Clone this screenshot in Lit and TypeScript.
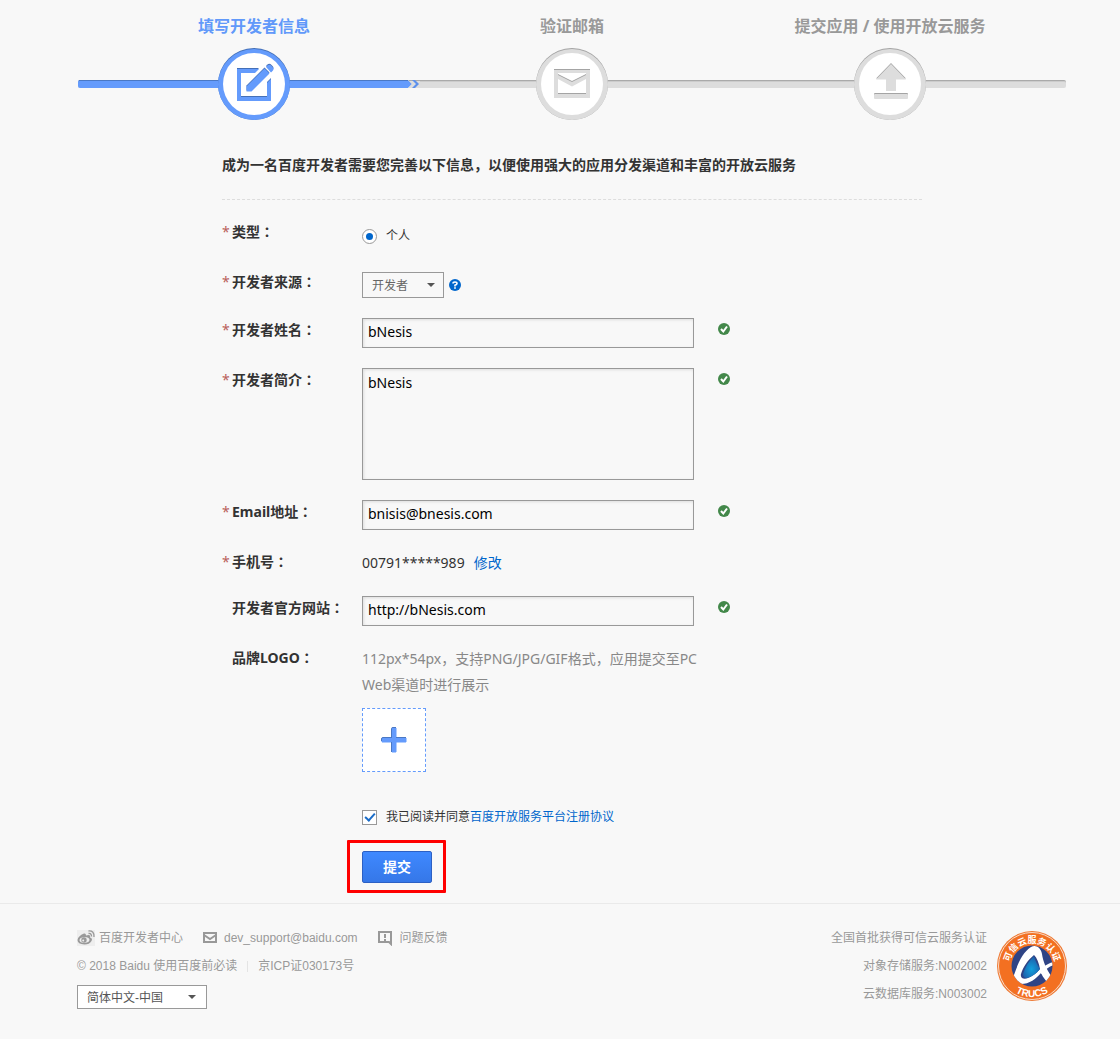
import { LitElement, html, css, svg, nothing } from "lit";
import { customElement, property } from "lit/decorators.js";

const editShape = svg`
  <path d="M19 20H41L37 24H23V48H49V34L53 30V52H19Z"/>
  <path d="M28.500 42.500V37.500L46.500 19.500L51.500 24.500L33.500 42.500Z"/>
  <path d="M48 18L49.500 16.500Q51.500 15 53.500 17L54.500 18Q56.500 20 54.500 22L53 23.500Z"/>`;
const mailShape = svg`
  <path fill-rule="evenodd" d="M18 21H54V49H18ZM22 24V26L36 33L50 26V24ZM22 30V45H50V30L36 37.500Z"/>`;
const uploadShape = svg`
  <path d="M37 15L52 30.500H42V42H32V30.500H22Z"/>
  <rect x="20" y="45" width="34" height="5" rx="1"/>`;

const steps = [
  { title: "填写开发者信息", shape: editShape, active: true },
  { title: "验证邮箱", shape: mailShape, active: false },
  { title: "提交应用 / 使用开放云服务", shape: uploadShape, active: false },
];

@customElement("dev-steps")
class DevSteps extends LitElement {
  static styles = css`
    :host { display: block; }
    .steps {
      position: relative;
      display: flex;
      justify-content: center;
      padding-top: 12px;
    }
    .track {
      position: absolute;
      left: 1px;
      right: 1px;
      bottom: 32px;
      height: 8px;
      box-sizing: border-box;
      background: #ddd;
      border-top: 1px solid #aaa;
      border-radius: 2px;
      box-shadow: inset 0 1px 0 #ccc;
    }
    .progress { position: absolute; left: 0; top: -1px; display: block; }
    .step {
      position: relative;
      flex: 0 1 318px;
      display: flex;
      flex-direction: column;
      align-items: center;
      gap: 8px;
    }
    .title {
      font-size: 16px;
      line-height: 28px;
      font-weight: 700;
      color: #999;
      white-space: nowrap;
    }
    .active .title { color: #6199fa; }
    .icon { display: block; }
    .dark { fill: #a4a4a4; }
    .light { fill: #ddd; }
    .active .dark { fill: #4470b8; }
    .active .light { fill: #649bfc; }
    .disc { fill: #fff; }
  `;
  render() {
    return html`
      <div class="steps">
        <div class="track">
          <svg class="progress" width="342" height="8" viewBox="0 0 342 8" aria-hidden="true">
            <path d="M2 0H330L334 4L330 8H2Q0 8 0 6V2Q0 0 2 0Z" fill="#649bfc"/>
            <path d="M1 0.500H330" stroke="#4a78c4" stroke-width="1"/>
            <path d="M330 0H342V8H330L334 4Z" fill="#ddd"/>
            <path d="M331 0.500H342" stroke="#aaa"/>
            <path d="M334 0H337L341 4L337 8H334L338 4Z" fill="#5c90ec"/>
          </svg>
        </div>
        ${steps.map((s) => html`
          <div class="step ${s.active ? "active" : ""}">
            <div class="title">${s.title}</div>
            <svg class="icon" width="72" height="72" viewBox="0 0 72 72" aria-hidden="true">
              <circle class="dark" cx="36" cy="36" r="36"/>
              <ellipse class="light" cx="36" cy="36.500" rx="36" ry="35.500"/>
              <circle class="disc" cx="36" cy="36" r="31"/>
              <g class="dark">${s.shape}</g>
              <g class="light" transform="translate(0 1)">${s.shape}</g>
            </svg>
          </div>`)}
      </div>`;
  }
}

@customElement("form-row")
class FormRow extends LitElement {
  @property() label = "";
  @property({ type: Boolean }) required = false;
  @property({ type: Boolean }) valid = false;
  static styles = css`
    :host { display: block; font-size: 14px; line-height: 26px; }
    .row { display: flex; align-items: flex-start; }
    .label {
      flex: 0 0 140px;
      display: flex;
      height: 26px;
      line-height: 24px;
      font-weight: 700;
      color: #333;
      white-space: nowrap;
    }
    .star { flex: 0 0 10px; font-weight: 400; color: #b9605a; }
    .colon { font-family: "Noto Sans CJK TC", sans-serif; line-height: 1; }
    .field { flex: 0 1 346px; min-width: 0; }
    .ok { flex: none; margin: 5px 0 0 10px; }
  `;
  render() {
    return html`
      <div class="row">
        <span class="label">
          <span class="star">${this.required ? "*" : nothing}</span>
          <span>${this.label}<span class="colon">：</span></span>
        </span>
        <div class="field"><slot></slot></div>
        ${this.valid ? html`
          <svg class="ok" width="12" height="12" viewBox="0 0 12 12" aria-hidden="true">
            <circle cx="6" cy="6" r="6" fill="#43884a"/>
            <path d="M3 6L5.300 8.500L9 3.500" fill="none" stroke="#fff" stroke-width="2"/>
          </svg>` : nothing}
      </div>`;
  }
}

@customElement("trucs-badge")
class TrucsBadge extends LitElement {
  static styles = css`
    :host { display: block; }
    .badge { display: block; }
    .cn { font: 700 9px "Noto Sans CJK SC", sans-serif; fill: #fff; }
    .en { font: 700 10px "Liberation Sans", sans-serif; fill: #fff; }
  `;
  render() {
    return html`
      <svg class="badge" width="70" height="70" viewBox="0 0 70 70" role="img" aria-label="TRUCS">
        <defs>
          <radialGradient id="core" cx="0.5" cy="0.6" r="0.6">
            <stop offset="0" stop-color="#12a0dc"/>
            <stop offset="1" stop-color="#1c5ca8"/>
          </radialGradient>
          <clipPath id="inner"><circle cx="35" cy="35" r="20.500"/></clipPath>
          <path id="top" d="M13.400 42A22.700 22.700 0 1 1 56.600 42"/>
          <path id="bottom" d="M8 50.200A31 31 0 0 0 62 50.200"/>
        </defs>
        <circle cx="35" cy="35" r="35" fill="#ee7a35"/>
        <circle cx="35" cy="35" r="33.500" fill="none" stroke="#fbd9c2" stroke-width="1"/>
        <circle cx="35" cy="35" r="32.500" fill="#f37021"/>
        <circle cx="35" cy="35" r="20.500" fill="#2f4485"/>
        <g clip-path="url(#inner)">
          <path fill-rule="evenodd" d="M17 44C21 32 26 21 34 16C39 13 44 17 45 23C46 30 49 38 55 46L50 51C46 46 45 44 44 42C39 48 31 54 22 53C18 52 16 49 17 44ZM24 43C23 47 27 49 31 47C36 45 40 42 43 38C42 32 40 27 37 24C31 29 26 36 24 43Z" fill="#fff"/>
          <path d="M26 43C28 36 32 30 37 25C38 30 41 35 43 38C39 43 34 46 30 47Q26 47 26 43Z" fill="url(#core)"/>
          <path d="M42 41C46 36 50 32 57 31V34C52 35 48 39 45 43Z" fill="#fff"/>
        </g>
        <text class="cn"><textPath href="#top" startOffset="50%" text-anchor="middle">可信云服务认证</textPath></text>
        <text class="en"><textPath href="#bottom" startOffset="50%" text-anchor="middle">TRUCS</textPath></text>
      </svg>`;
  }
}

@customElement("app-root")
class AppRoot extends LitElement {
  static styles = css`
    :host {
      display: block;
      min-height: 100vh;
      box-sizing: border-box;
      background: #f8f8f8;
      color: #333;
      font-family: "Noto Sans", "Noto Sans CJK SC", sans-serif;
      font-size: 14px;
      line-height: 26px;
    }
    .page { padding-left: 24px; }
    .wrap { max-width: 990px; margin: 0 auto; }
    .form { max-width: 700px; margin: 33px auto 10px; }
    .heading {
      margin: 0;
      padding-bottom: 22px;
      border-bottom: 1px dashed #ddd;
      font-size: 14px;
      line-height: 24px;
      font-weight: 700;
    }
    .rows { display: flex; flex-direction: column; gap: 20px; margin-top: 20px; }
    a { color: #0066cc; text-decoration: none; }
    .choice { display: flex; align-items: center; font-size: 12px; line-height: 26px; gap: 9px; }
    .type { padding: 3px 0 1px; }
    .radio, .check {
      appearance: none;
      box-sizing: border-box;
      width: 15px;
      height: 15px;
      margin: 0;
      border: 1px solid #999;
      background: #fff;
      display: grid;
      place-items: center;
    }
    .radio { border-radius: 50%; }
    .radio:checked::after { content: ""; width: 7px; height: 7px; border-radius: 50%; background: #0066cc; }
    .check:checked::after {
      content: "";
      box-sizing: border-box;
      width: 10px;
      height: 6px;
      margin-bottom: 3px;
      border: solid #1a6cc8;
      border-width: 0 0 2px 2px;
      transform: rotate(-48deg);
    }
    .source { display: flex; align-items: center; gap: 5px; padding-top: 2px; }
    .picker { position: relative; display: block; }
    .select {
      appearance: none;
      display: block;
      box-sizing: border-box;
      width: 82px;
      height: 26px;
      margin: 0;
      padding: 1px 20px 0 9px;
      border: 1px solid #999;
      border-radius: 0;
      background: transparent;
      color: #666;
      font: 12px "Liberation Sans", "Noto Sans CJK SC", sans-serif;
    }
    .arrow { position: absolute; right: 9px; top: 50%; margin-top: -2px; pointer-events: none; }
    .language { width: 130px; height: 24px; background: #fff; color: #555; }
    .language + .arrow { right: 11px; }
    .input {
      display: block;
      box-sizing: border-box;
      width: 100%;
      max-width: 332px;
      height: 30px;
      margin: 0;
      padding: 0 5px 4px;
      border: 1px solid #999;
      border-radius: 0;
      background: #f8f8f8;
      box-shadow: inset 1px 1px 3px #ddd;
      color: #000;
      font: inherit;
      font-size: 14px;
      resize: none;
    }
    .area { height: 112px; padding-top: 4px; line-height: 20px; }
    .phone { display: flex; gap: 9px; height: 26px; }
    .hint { color: #888; }
    .upload {
      display: grid;
      place-items: center;
      box-sizing: border-box;
      width: 64px;
      height: 64px;
      margin-top: 10px;
      padding: 0;
      border: 1px dashed #649bfc;
      background: #fff;
    }
    .agree { margin: 32px 0 10px 140px; }
    .highlight {
      width: fit-content;
      margin-left: 125px;
      padding: 8px 11px 7px 12px;
      border: 3px solid #f00;
      border-radius: 1px;
    }
    .submit {
      display: block;
      box-sizing: border-box;
      width: 70px;
      height: 32px;
      padding: 0;
      border: 1px solid #2c60c4;
      border-radius: 2px;
      background: linear-gradient(#3f89ff, #3577e8);
      color: #fff;
      font: inherit;
      font-weight: 700;
    }
    .footer {
      padding: 20px 0 30px 24px;
      border-top: 1px solid #eaeaea;
      color: #999;
      font-family: "Liberation Sans", "Noto Sans CJK SC", sans-serif;
      font-size: 12px;
      line-height: 28px;
    }
    .footer a { color: #999; display: flex; align-items: center; }
    .bottom { display: flex; justify-content: space-between; align-items: flex-start; }
    .links { display: flex; gap: 20px; }
    .footer .weibo { gap: 4px; }
    .mail { gap: 7px; }
    .legal { display: flex; align-items: center; gap: 10px; }
    .rule { width: 1px; height: 11px; background: #e4e4e4; }
    .lang { margin-top: 5px; width: fit-content; }
    .certs { display: flex; gap: 10px; text-align: right; }
    .seal { margin-top: 7px; }
  `;

  private arrow() {
    return html`<svg class="arrow" width="8" height="4" viewBox="0 0 8 4" aria-hidden="true"><path d="M0 0H8L4 4Z" fill="#555"/></svg>`;
  }

  render() {
    return html`
      <div class="page">
        <div class="wrap">
          <dev-steps></dev-steps>
          <form class="form" @submit=${(e: Event) => e.preventDefault()}>
            <h1 class="heading">成为一名百度开发者需要您完善以下信息，以便使用强大的应用分发渠道和丰富的开放云服务</h1>
            <div class="rows">
              <form-row label="类型" required>
                <label class="choice type"><input class="radio" type="radio" name="type" checked /><span>个人</span></label>
              </form-row>
              <form-row label="开发者来源" required>
                <div class="source">
                  <span class="picker">
                    <select class="select" aria-label="开发者来源"><option>开发者</option></select>
                    ${this.arrow()}
                  </span>
                  <svg width="12" height="12" viewBox="0 0 12 12" aria-hidden="true">
                    <circle cx="6" cy="6" r="6" fill="#0066cc"/>
                    <path d="M4 4.500Q4 3 6 3Q8 3 8 4.600Q8 5.600 6 6.200V7.400" fill="none" stroke="#fff" stroke-width="1.600"/>
                    <rect x="5.200" y="8.200" width="1.600" height="1.600" fill="#fff"/>
                  </svg>
                </div>
              </form-row>
              <form-row label="开发者姓名" required valid>
                <input class="input" type="text" aria-label="开发者姓名" .value=${"bNesis"} />
              </form-row>
              <form-row label="开发者简介" required valid>
                <textarea class="input area" aria-label="开发者简介" .value=${"bNesis"}></textarea>
              </form-row>
              <form-row label="Email地址" required valid>
                <input class="input" type="email" aria-label="Email地址" .value=${"bnisis@bnesis.com"} />
              </form-row>
              <form-row label="手机号" required>
                <div class="phone"><span>00791*****989</span><a href="#phone">修改</a></div>
              </form-row>
              <form-row label="开发者官方网站" valid>
                <input class="input" type="url" aria-label="开发者官方网站" .value=${"http://bNesis.com"} />
              </form-row>
              <form-row label="品牌LOGO">
                <div class="hint">112px*54px，支持PNG/JPG/GIF格式，应用提交至PC Web渠道时进行展示</div>
                <button class="upload" type="button" aria-label="品牌LOGO">
                  <svg width="26" height="26" viewBox="0 0 26 26" aria-hidden="true">
                    <path d="M11 1H15V11H25V15H15V25H11V15H1V11H11Z" fill="#649bfc" stroke="#649bfc" stroke-linejoin="round"/>
                    <path d="M10.500 11V1.500Q10.500 0.500 12 0.500H15M10.500 15V25M15 10.500H25M0.500 14V12Q0.500 10.500 2 10.500H10.500" fill="none" stroke="#4a78c4"/>
                  </svg>
                </button>
              </form-row>
            </div>
            <div class="choice agree">
              <input class="check" id="agree" type="checkbox" checked />
              <span><label for="agree">我已阅读并同意</label><a href="#agreement">百度开放服务平台注册协议</a></span>
            </div>
            <div class="highlight"><button class="submit" type="submit">提交</button></div>
          </form>
        </div>
      </div>
      <footer class="footer">
        <div class="wrap bottom">
          <div>
            <div class="links">
              <a class="weibo" href="#weibo">
                <svg width="18" height="16" viewBox="0 0 18 16" aria-hidden="true">
                  <rect width="18" height="16" fill="#eee"/>
                  <path fill-rule="evenodd" d="M7 3.500Q9 3 9 5.500Q14 4 13 7.500Q16 8.500 14.500 11Q12.500 14.500 7.500 14.500Q0.500 14 0.500 10Q1 6 7 3.500ZM7.500 7Q2.500 7.500 2.500 10.300Q3 13 7.500 13Q12.500 12.500 12.500 9.800Q12 7 7.500 7Z" fill="#999"/>
                  <circle cx="7" cy="10" r="2.700" fill="#999"/>
                  <circle cx="6.200" cy="10.500" r="1" fill="#eee"/>
                  <path d="M11.500 3.500Q14.500 3 14.500 6.500M11.500 1Q17.500 0.500 17 7" fill="none" stroke="#999" stroke-width="1.300"/>
                </svg><span>百度开发者中心</span></a>
              <a class="mail" href="mailto:dev_support@baidu.com">
                <svg width="14" height="12" viewBox="0 0 14 12" aria-hidden="true">
                  <rect x="1" y="1" width="12" height="9" fill="none" stroke="#999" stroke-width="2"/>
                  <path d="M1 3L7 7L13 3" fill="none" stroke="#999" stroke-width="2"/>
                </svg><span>dev_support@baidu.com</span></a>
              <a class="mail" href="#feedback">
                <svg width="15" height="15" viewBox="0 0 15 15" aria-hidden="true">
                  <path d="M1 1H13V13L11 11H1Z" fill="none" stroke="#999" stroke-width="2"/>
                  <path d="M7 3V7M7 8V10" stroke="#999" stroke-width="2"/>
                </svg><span>问题反馈</span></a>
            </div>
            <div class="legal"><span>© 2018 Baidu 使用百度前必读</span><span class="rule"></span><span>京ICP证030173号</span></div>
            <div class="picker lang">
              <select class="select language" aria-label="语言"><option>简体中文-中国</option></select>
              ${this.arrow()}
            </div>
          </div>
          <div class="certs">
            <div>
              <div>全国首批获得可信云服务认证</div>
              <div>对象存储服务:N002002</div>
              <div>云数据库服务:N003002</div>
            </div>
            <trucs-badge class="seal"></trucs-badge>
          </div>
        </div>
      </footer>`;
  }
}
